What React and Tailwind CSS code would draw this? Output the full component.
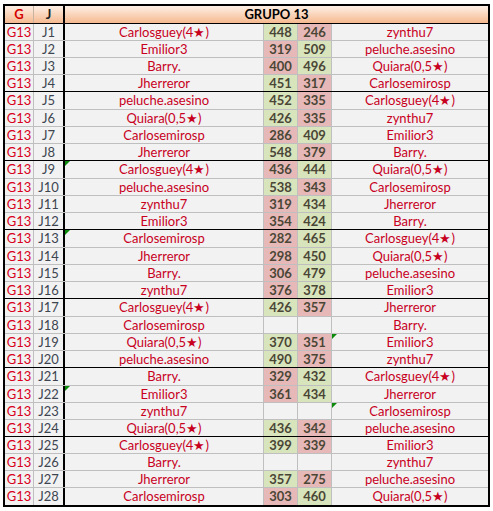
const rows = [
  ["J1", "Carlosguey(4★)", 448, 246, "zynthu7", 1],
  ["J2", "Emilior3", 319, 509, "peluche.asesino", 2],
  ["J3", "Barry.", 400, 496, "Quiara(0,5★)", 2],
  ["J4", "Jherreror", 451, 317, "Carlosemirosp", 1],
  ["J5", "peluche.asesino", 452, 335, "Carlosguey(4★)", 1],
  ["J6", "Quiara(0,5★)", 426, 335, "zynthu7", 1],
  ["J7", "Carlosemirosp", 286, 409, "Emilior3", 2],
  ["J8", "Jherreror", 548, 379, "Barry.", 1],
  ["J9", "Carlosguey(4★)", 436, 444, "Quiara(0,5★)", 2, "t1"],
  ["J10", "peluche.asesino", 538, 343, "Carlosemirosp", 1],
  ["J11", "zynthu7", 319, 434, "Jherreror", 2],
  ["J12", "Emilior3", 354, 424, "Barry.", 2],
  ["J13", "Carlosemirosp", 282, 465, "Carlosguey(4★)", 2, "t1"],
  ["J14", "Jherreror", 298, 450, "Quiara(0,5★)", 2],
  ["J15", "Barry.", 306, 479, "peluche.asesino", 2],
  ["J16", "zynthu7", 376, 378, "Emilior3", 2],
  ["J17", "Carlosguey(4★)", 426, 357, "Jherreror", 1],
  ["J18", "Carlosemirosp", null, null, "Barry.", 0],
  ["J19", "Quiara(0,5★)", 370, 351, "Emilior3", 1, "t2"],
  ["J20", "peluche.asesino", 490, 375, "zynthu7", 1],
  ["J21", "Barry.", 329, 432, "Carlosguey(4★)", 2],
  ["J22", "Emilior3", 361, 434, "Jherreror", 2, "t1"],
  ["J23", "zynthu7", null, null, "Carlosemirosp", 0, "t2"],
  ["J24", "Quiara(0,5★)", 436, 342, "peluche.asesino", 1],
  ["J25", "Carlosguey(4★)", 399, 339, "Emilior3", 1],
  ["J26", "Barry.", null, null, "zynthu7", 0],
  ["J27", "Jherreror", 357, 275, "peluche.asesino", 1],
  ["J28", "Carlosemirosp", 303, 460, "Quiara(0,5★)", 2],
];

function Flag() {
  return (
    <svg className="absolute top-0 left-0" width="5" height="5" viewBox="0 0 5 5">
      <polygon points="0,0 5,0 0,5" fill="#0b8a0b" />
    </svg>
  );
}

function scoreBg(win, slot) {
  if (!win) return "bg-[#f2f2f2]";
  return win === slot ? "bg-[#d8e4bc]" : "bg-[#e6b8b7]";
}

export default function App() {
  return (
    <div className="bg-white w-[493px] h-[511px] pt-[4px] pl-[3px] font-['Lato','Liberation_Sans',sans-serif] text-[13px] leading-none">
      <div className="w-[487px] border-2 border-black bg-[#f2f2f2]">
        <div className="flex h-[18px] border-b border-black bg-gradient-to-b from-[#fdf0e6] to-[#f5b98f] font-bold">
          <div className="w-[29px] flex items-center justify-center border-r border-[#c9b3a3] text-[#d40000]">G</div>
          <div className="w-[31px] flex items-center justify-center border-r-2 border-black text-[#222]">J</div>
          <div className="flex-1 flex items-center justify-center text-black">GRUPO 13</div>
        </div>
        {rows.map(([j, home, s1, s2, away, win, flag], i) => {
          const last = i === rows.length - 1;
          const groupEnd = i % 4 === 3 && !last;
          const tall = i % 4 === 0 && i > 0 && i < 24;
          return (
            <div
              key={j}
              className={`flex ${tall ? "h-[18px]" : "h-[17px]"} ${
                last ? "" : groupEnd ? "border-b border-black" : "border-b border-[#bfbfbf]"
              }`}
            >
              <div className="w-[29px] flex items-center justify-center border-r border-[#bfbfbf] text-[#d8001c]">G13</div>
              <div className="w-[31px] flex items-center justify-center border-r-2 border-black text-[#3d4550]">{j}</div>
              <div className="relative w-[199px] flex items-center justify-center border-r border-[#bfbfbf] text-[#c8001e]">
                {flag === "t1" && <Flag />}
                {home}
              </div>
              <div className={`w-[34px] flex items-center justify-center border-r border-[#bfbfbf] font-bold text-[#4a4636] ${scoreBg(win, 1)}`}>
                {s1}
              </div>
              <div className={`w-[34px] flex items-center justify-center border-r border-[#bfbfbf] font-bold text-[#4a4636] ${scoreBg(win, 2)}`}>
                {s2}
              </div>
              <div className="relative flex-1 flex items-center justify-center text-[#c8001e]">
                {flag === "t2" && <Flag />}
                {away}
              </div>
            </div>
          );
        })}
      </div>
    </div>
  );
}
